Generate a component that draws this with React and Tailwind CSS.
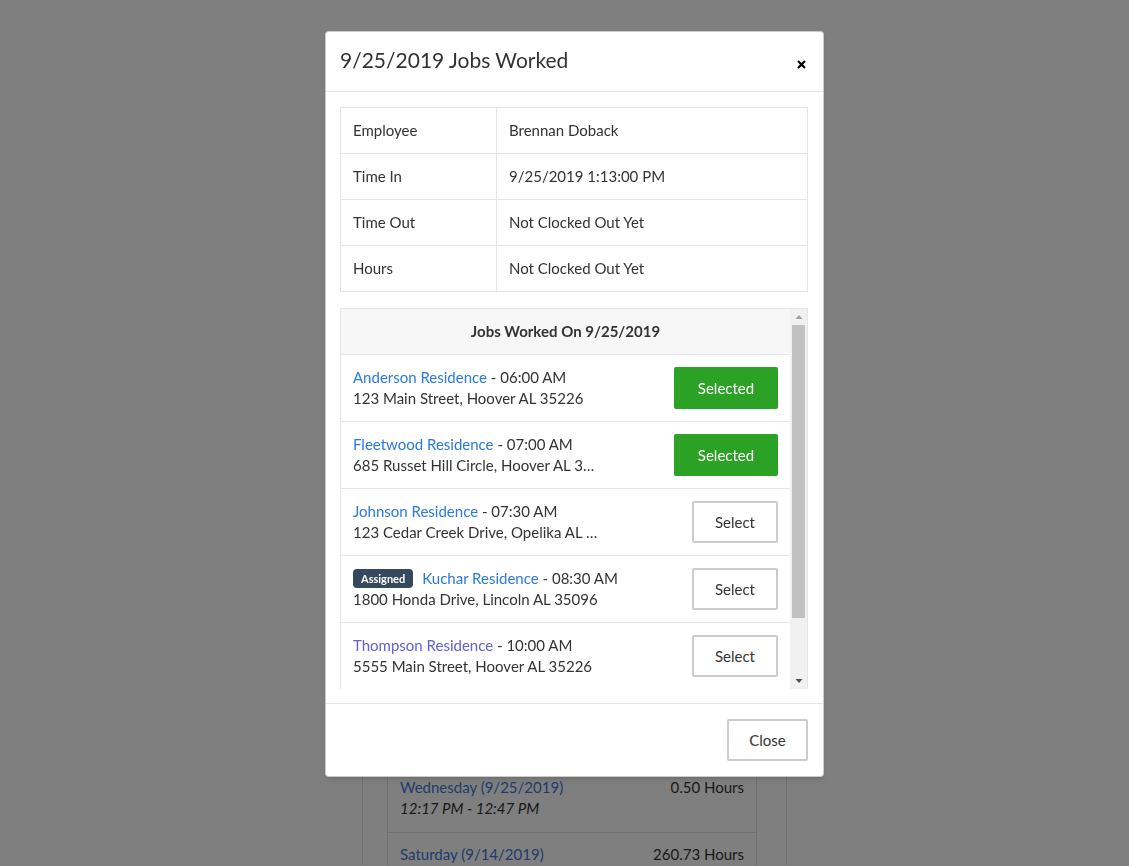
import React from 'react';

const jobs = [
  { name: 'Anderson Residence', time: '06:00 AM', address: '123 Main Street, Hoover AL 35226', selected: true },
  { name: 'Fleetwood Residence', time: '07:00 AM', address: '685 Russet Hill Circle, Hoover AL 35244', selected: true },
  { name: 'Johnson Residence', time: '07:30 AM', address: '123 Cedar Creek Drive, Opelika AL 36801', selected: false },
  { name: 'Kuchar Residence', time: '08:30 AM', address: '1800 Honda Drive, Lincoln AL 35096', selected: false, assigned: true },
  { name: 'Thompson Residence', time: '10:00 AM', address: '5555 Main Street, Hoover AL 35226', selected: false, visited: true },
  { name: 'Walker Residence', time: '11:30 AM', address: '410 Oak Street, Hoover AL 35226', selected: false },
];

const details = [
  ['Employee', 'Brennan Doback'],
  ['Time In', '9/25/2019 1:13:00 PM'],
  ['Time Out', 'Not Clocked Out Yet'],
  ['Hours', 'Not Clocked Out Yet'],
];

// the visible part of the timesheet under the modal
const days = [
  { day: 'Wednesday (9/25/2019)', span: '12:17 PM - 12:47 PM', hours: '0.50' },
  { day: 'Saturday (9/14/2019)', span: '9/14/2019 - 9/25/2019', hours: '260.73' },
];

const font = { fontFamily: 'Lato, "Open Sans", sans-serif' };

const App = () => {
  return (
    <div className="relative h-[866px] overflow-hidden bg-white text-[#333]" style={font}>
      {/* PAGE BEHIND THE MODAL */}
      <div className="ml-[362px] mt-[162px] w-[425px] h-[704px] border-x border-[#e0e0e0]">
        <div className="ml-[24px] mr-[29px] pt-[603px] border-x border-t border-[#e0e0e0]">
          {days.map((d, i) => (
            <div key={i} className="h-[67px] flex justify-between px-[12px] pt-[11px] border-b border-[#e0e0e0] text-[15px] leading-[21px]">
              <div>
                <div className="text-[#3c78d8]">{d.day}</div>
                <div className="italic">{d.span}</div>
              </div>
              <div>{d.hours} Hours</div>
            </div>
          ))}
        </div>
      </div>

      {/* OVERLAY */}
      <div className="fixed inset-0 bg-black/50">
        <div className="ml-[325px] mt-[31px] w-[499px] bg-white rounded-[4px] border border-black/20 shadow-md">
          {/* HEADER */}
          <div className="flex items-center justify-between h-[60px] pl-[14px] pr-[15px] border-b border-[#e5e5e5]">
            <h4 className="text-[21px] text-[#333] mb-[3px]">9/25/2019 Jobs Worked</h4>
            <svg width="9" height="9" viewBox="0 0 9 9" className="mt-[6px] mr-[2px]">
              <path d="M1 1 L8 8 M8 1 L1 8" stroke="#000" strokeWidth="2.2" />
            </svg>
          </div>

          {/* BODY */}
          <div className="pl-[14px] pr-[15px] pt-[15px] pb-[14px]">
            <table className="w-full border-collapse text-[15px]">
              <tbody>
                {details.map(([label, value]) => (
                  <tr key={label} className="h-[46px]">
                    <td className="w-[156px] border border-[#e5e5e5] px-[12px]">{label}</td>
                    <td className="border border-[#e5e5e5] px-[12px]">{value}</td>
                  </tr>
                ))}
              </tbody>
            </table>

            <div className="mt-[16px] flex h-[381px] border-x border-t border-[#e5e5e5] overflow-hidden">
              <div className="flex-1 min-w-0">
                <div className="h-[46px] flex items-center justify-center bg-[#f7f7f7] border-b border-[#e5e5e5] text-[15px] font-bold">
                  Jobs Worked On 9/25/2019
                </div>
                {jobs.map((job) => (
                  <div key={job.name} className="h-[67px] flex items-center justify-between px-[12px] border-b border-[#e5e5e5]">
                    <div className="min-w-0 text-[15px] leading-[21px]">
                      <div className="flex items-center">
                        {job.assigned && (
                          <span className="mr-[9px] bg-[#34495e] text-white text-[11px] font-bold rounded-[4px] px-[8px] h-[19px] leading-[19px]">
                            Assigned
                          </span>
                        )}
                        <span className={job.visited ? 'text-[#6060d8]' : 'text-[#2a79e4]'}>{job.name}</span>
                        <span>&nbsp;- {job.time}</span>
                      </div>
                      <div className="max-w-[245px] truncate">{job.address}</div>
                    </div>
                    {job.selected ? (
                      <button className="w-[104px] h-[42px] bg-[#2ba125] text-white text-[15px] rounded-[2px]">Selected</button>
                    ) : (
                      <button className="w-[86px] h-[42px] bg-white border-2 border-[#cccccc] text-[15px] rounded-[2px]">Select</button>
                    )}
                  </div>
                ))}
              </div>

              {/* scrollbar */}
              <div className="w-[17px] bg-[#f1f1f1] flex flex-col items-center">
                <svg width="8" height="16" viewBox="0 0 8 16">
                  <path d="M0.5 10 L4 6 L7.5 10 Z" fill="#a3a3a3" />
                </svg>
                <div className="w-[13px] h-[293px] bg-[#c1c1c1]" />
                <div className="flex-1" />
                <svg width="8" height="16" viewBox="0 0 8 16">
                  <path d="M0.5 6 L4 10 L7.5 6 Z" fill="#505050" />
                </svg>
              </div>
            </div>
          </div>

          {/* FOOTER */}
          <div className="flex justify-end px-[15px] py-[15px] border-t border-[#e5e5e5]">
            <button className="w-[81px] h-[42px] bg-white border-2 border-[#cccccc] text-[15px] rounded-[2px]">Close</button>
          </div>
        </div>
      </div>
    </div>
  );
};

export default App;
